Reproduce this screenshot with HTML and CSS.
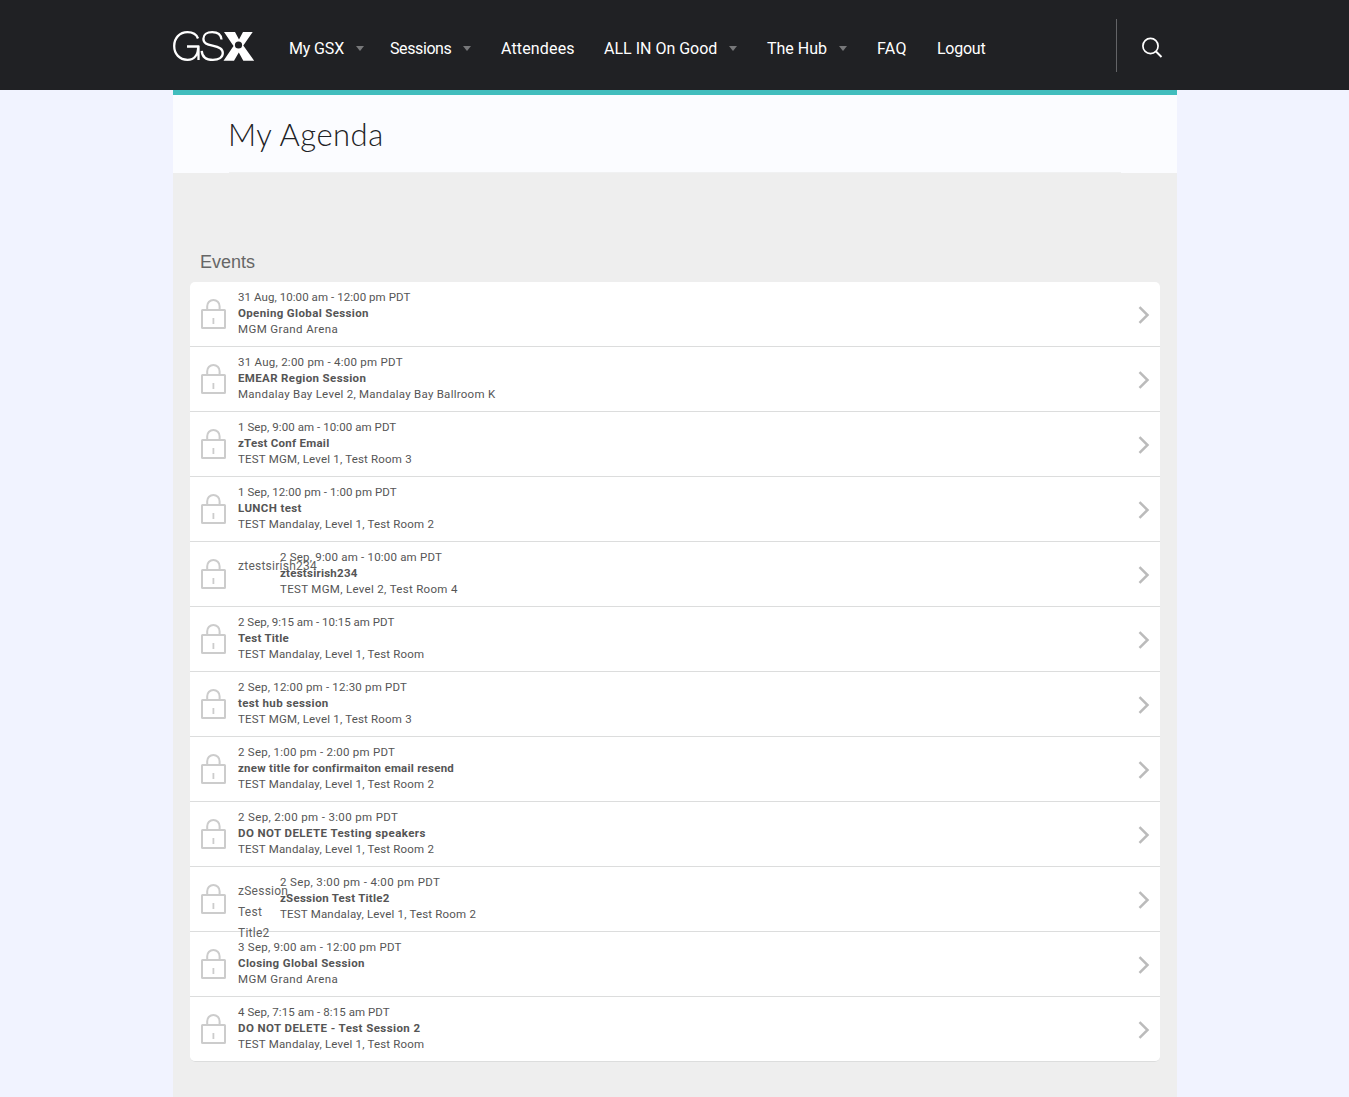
FILE: index.html
```html
<!DOCTYPE html>
<html lang="en">
<head>
<meta charset="utf-8">
<title>My Agenda</title>
<link rel="stylesheet" href="styles.css">
</head>
<body>
<svg width="0" height="0" class="defs" aria-hidden="true">
  <symbol id="lock" viewBox="0 0 26 31"><rect x="1" y="12" width="23" height="18" rx=".5" fill="none" stroke="#ccc" stroke-width="2"/><path d="M6.200 11V8.200a6.200 6.200 0 0 1 12.400 0V11" fill="none" stroke="#ccc" stroke-width="2"/><path d="M12.400 20v6" stroke="#ccc" stroke-width="1.800"/></symbol>
  <symbol id="chevron" viewBox="0 0 12 18"><path d="M1.500 1.200 9.500 9l-8 7.800" fill="none" stroke="#bbb" stroke-width="2.500"/></symbol>
</svg>
<header class="topbar">
  <div class="topbar-inner">
    <svg class="logo" viewBox="0 0 82 32" aria-label="GSX">
      <g fill="none" stroke="#fff" stroke-width="2.300">
        <path d="M25 8.500C23.500 4.500 19.800 2.200 14.500 2.200 6.500 2.200 1.200 8 1.200 16s5.300 13.800 13.300 13.800c6.800 0 10.700-5 10.700-13.300H14M25.500 16v14"/>
        <path d="M48.500 9.500c-.5-4.800-4-7.300-9.300-7.300-5.400 0-8.800 2.600-8.800 6.600 0 4.400 3.500 5.700 9.100 6.900 6.500 1.400 10.300 2.800 10.300 7.300 0 4.400-4 6.800-9.900 6.800-6.500 0-10.800-3-11.200-9"/>
      </g>
      <path fill="#fff" d="M51 2h11l4 7.500L70 2h9.700L70.300 15.500 81.200 30.700H70.300l-4.500-8.200-4.800 8.200H50.500L60.500 16z"/>
      <circle cx="65.500" cy="15" r="3.600" fill="#202124"/>
    </svg>
    <nav class="nav">
      <a class="n1 menu">My GSX</a>
      <a class="n2 menu">Sessions</a>
      <a class="n3">Attendees</a>
      <a class="n4 menu">ALL IN On Good</a>
      <a class="n5 menu">The Hub</a>
      <a class="n6">FAQ</a>
      <a class="n7">Logout</a>
    </nav>
    <div class="search"><svg width="22" height="22" viewBox="0 0 22 22"><circle cx="9.500" cy="9" r="7.600" fill="none" stroke="#fff" stroke-width="1.700"/><path d="m15 14.500 5.500 5.500" stroke="#fff" stroke-width="2"/></svg></div>
  </div>
</header>
<main class="page">
  <div class="title"><h1><span>My Agenda</span></h1></div>
  <h2>Events</h2>
  <ul class="events">
    <li><svg class="lock"><use href="#lock"/></svg><div class="info"><p class="time tight">31 Aug, 10:00 am - 12:00 pm PDT</p><b>Opening Global Session</b><p class="place arena">MGM Grand Arena</p></div><svg class="chev"><use href="#chevron"/></svg></li>
    <li><svg class="lock"><use href="#lock"/></svg><div class="info"><p class="time">31 Aug, 2:00 pm - 4:00 pm PDT</p><b>EMEAR Region Session</b><p class="place bay">Mandalay Bay Level 2, Mandalay Bay Ballroom K</p></div><svg class="chev"><use href="#chevron"/></svg></li>
    <li><svg class="lock"><use href="#lock"/></svg><div class="info"><p class="time tight">1 Sep, 9:00 am - 10:00 am PDT</p><b class="snug">zTest Conf Email</b><p class="place">TEST MGM, Level 1, Test Room 3</p></div><svg class="chev"><use href="#chevron"/></svg></li>
    <li><svg class="lock"><use href="#lock"/></svg><div class="info"><p class="time tight">1 Sep, 12:00 pm - 1:00 pm PDT</p><b>LUNCH test</b><p class="place">TEST Mandalay, Level 1, Test Room 2</p></div><svg class="chev"><use href="#chevron"/></svg></li>
    <li><svg class="lock"><use href="#lock"/></svg><span class="alt">ztestsirish234</span><div class="info"><p>2 Sep, 9:00 am - 10:00 am PDT</p><b class="snug">ztestsirish234</b><p class="place wide">TEST MGM, Level 2, Test Room 4</p></div><svg class="chev"><use href="#chevron"/></svg></li>
    <li><svg class="lock"><use href="#lock"/></svg><div class="info"><p class="time tighter">2 Sep, 9:15 am - 10:15 am PDT</p><b class="snug">Test Title</b><p class="place">TEST Mandalay, Level 1, Test Room</p></div><svg class="chev"><use href="#chevron"/></svg></li>
    <li><svg class="lock"><use href="#lock"/></svg><div class="info"><p>2 Sep, 12:00 pm - 12:30 pm PDT</p><b>test hub session</b><p class="place">TEST MGM, Level 1, Test Room 3</p></div><svg class="chev"><use href="#chevron"/></svg></li>
    <li><svg class="lock"><use href="#lock"/></svg><div class="info"><p class="time">2 Sep, 1:00 pm - 2:00 pm PDT</p><b class="snug">znew title for confirmaiton email resend</b><p class="place">TEST Mandalay, Level 1, Test Room 2</p></div><svg class="chev"><use href="#chevron"/></svg></li>
    <li><svg class="lock"><use href="#lock"/></svg><div class="info"><p class="time wide">2 Sep, 2:00 pm - 3:00 pm PDT</p><b class="caps">DO NOT DELETE Testing speakers</b><p class="place">TEST Mandalay, Level 1, Test Room 2</p></div><svg class="chev"><use href="#chevron"/></svg></li>
    <li><svg class="lock"><use href="#lock"/></svg><span class="alt">zSession Test Title2</span><div class="info"><p class="time wide">2 Sep, 3:00 pm - 4:00 pm PDT</p><b class="snug">zSession Test Title2</b><p class="place">TEST Mandalay, Level 1, Test Room 2</p></div><svg class="chev"><use href="#chevron"/></svg></li>
    <li><svg class="lock"><use href="#lock"/></svg><div class="info"><p class="time">3 Sep, 9:00 am - 12:00 pm PDT</p><b>Closing Global Session</b><p class="place arena">MGM Grand Arena</p></div><svg class="chev"><use href="#chevron"/></svg></li>
    <li><svg class="lock"><use href="#lock"/></svg><div class="info"><p class="time tight">4 Sep, 7:15 am - 8:15 am PDT</p><b class="caps">DO NOT DELETE - Test Session 2</b><p class="place">TEST Mandalay, Level 1, Test Room</p></div><svg class="chev"><use href="#chevron"/></svg></li>
  </ul>
</main>
</body>
</html>
```
FILE: styles.css
```css
* { box-sizing: border-box; }
html, body { height: 100%; }
body { margin: 0; overflow: hidden; background: #f1f3ff; font-family: Roboto, "Liberation Sans", sans-serif; }
.defs { display: none; }
.topbar { height: 90px; background: #202124; }
.topbar-inner { width: 1004px; height: 90px; margin-left: 173px; display: flex; }
.logo { width: 82px; height: 32px; margin-top: 30px; flex: none; }
.nav { display: flex; margin: 38px 0 0 34px; flex: 1; color: #fff; font-size: 16px; line-height: 22px; white-space: nowrap; }
.nav a { display: flex; flex: none; }
.menu::after { content: ""; margin: 8px 0 0 auto; border: solid transparent; border-width: 5px 4.5px 0; border-top-color: #77787a; height: 0; }
.n1 { width: 75px; margin-right: 26px; letter-spacing: -.15px; }
.n2 { width: 81px; margin-right: 30px; letter-spacing: -.4px; }
.n3 { width: 73px; margin-right: 30px; letter-spacing: .15px; }
.n4 { width: 133px; margin-right: 30px; }
.n5 { width: 80px; margin-right: 30px; }
.n6 { width: 30px; margin-right: 30px; letter-spacing: .3px; }
.n7 { letter-spacing: -.25px; }
.search { width: 61px; height: 53px; margin-top: 19px; border-left: 1px solid #636467; padding: 18px 0 0 24px; }
.page { width: 1004px; height: 1007px; margin-left: 173px; background: #eee; border-top: 5px solid #41bdbd; }
.title { height: 78px; background: #fbfcff; padding: 0 56px; }
h1 { margin: 0; height: 78px; border-bottom: 1px solid #f0f1f2; font: 300 31px/79px Lato, sans-serif; letter-spacing: .5px; text-indent: -1px; color: #202124; }
h2 { margin: 77px 0 0 27px; font: 18px/24px "Liberation Sans", sans-serif; color: #666; }
.events { list-style: none; margin: 8px 17px 0; padding: 0; background: #fff; border-radius: 5px; }
li { height: 65px; border-bottom: 1px solid #dcdddd; display: flex; padding-left: 11px; }
li:last-child { border-radius: 0 0 5px 5px; }
.lock { width: 26px; height: 31px; margin: 16px 11px 0 0; flex: none; }
.chev { width: 12px; height: 18px; margin: 24px 10px 0 0; flex: none; }
.info { flex: 1; padding-top: 7px; font-size: 11.5px; line-height: 16px; letter-spacing: .2px; color: #555; white-space: nowrap; }
.info p { margin: 0; }
.info b { display: block; font-weight: 700; letter-spacing: .36px; }
.info b.snug { letter-spacing: .25px; }
.info b.caps { letter-spacing: .42px; }
.time { letter-spacing: .25px; }
.time.tight { letter-spacing: .07px; }
.time.tighter { letter-spacing: 0; }
.time.wide { letter-spacing: .36px; }
.place { letter-spacing: .19px; }
.place.wide { letter-spacing: .32px; }
.place.arena { letter-spacing: .4px; }
.place.bay { letter-spacing: .26px; }
.alt { width: 42px; padding-top: 14px; flex: none; font-size: 12px; line-height: 21px; letter-spacing: .25px; color: #5f5f5f; }
```
